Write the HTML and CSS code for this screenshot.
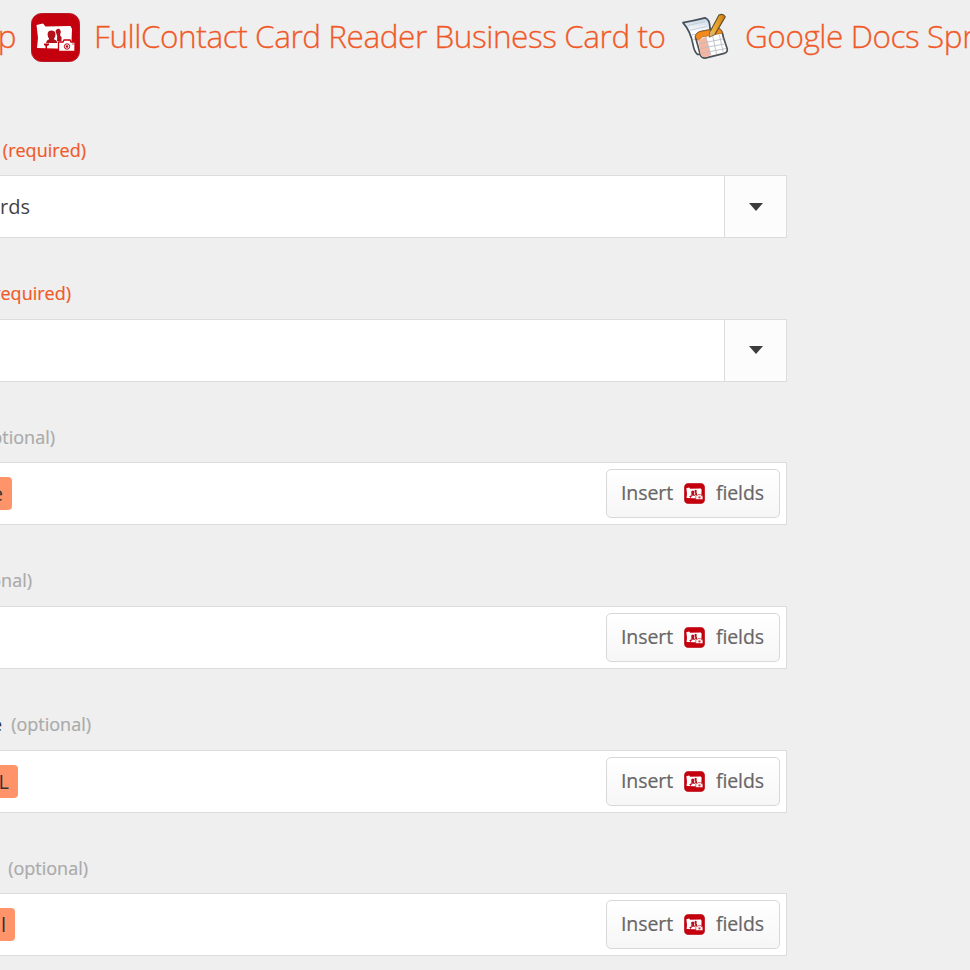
FILE: index.html
```
<!DOCTYPE html>
<html lang="en">
<head>
  <meta charset="UTF-8">
  <meta name="viewport" content="width=device-width, initial-scale=1.0">
  <link rel="stylesheet" href="styles.css">
</head>
<body>

  <!-- Shared card reader icon -->
  <svg class="sprite" width="0" height="0">
    <symbol id="card-reader" viewBox="0 0 49 49">
      <rect x="0.5" y="0.5" width="48" height="48" rx="10" fill="#c4000f" stroke="#b51a24"/>
      <path d="M5.500 12 L12 10.500 L14.500 13.500 L39.500 13 L41 16 L40.500 28 L42 36 L6 35 L7 25 Z" fill="#fff"/>
      <path d="M24.500 18 q2-3.500 4.500-1.500 q1.500 2 .2 4.500 q-.5 2 1.300 3 v4 h-4.500 q1-5-1.500-10 z" fill="#b3101c"/>
      <path d="M20.500 17.500 q4 0 4 4 q0 2.500-1.500 4 l.2 1 q3 .5 3 3.500 h-11 q0-3 2.700-3.500 l.2-1 q-1.500-1.500-1.500-4 q0-4 3.900-4 z" fill="#b3101c"/>
      <path d="M13 30.500 h5 v1.500 l-2 1 v3 h-1.500 v-3 l-1.500-1 z" fill="#c4000f"/>
      <path d="M27.500 29 h4.500 l1-2 h6 l1 2 h4 v9.500 h-16.500 z" fill="#fff" stroke="#c4000f" stroke-width="1.300"/>
      <circle cx="36" cy="33.500" r="2.700" fill="#fff" stroke="#c4000f" stroke-width="1"/>
      <circle cx="36" cy="33.500" r="1.300" fill="#c4000f"/>
      <circle cx="42" cy="31" r=".7" fill="#c4000f"/>
    </symbol>
  </svg>

  <h1 class="title">
    <span class="title-start">p</span>
    <svg class="title-icon"><use href="#card-reader"/></svg>
    <span class="title-trigger">FullContact Card Reader Business Card to</span>
    <svg class="docs-icon" viewBox="0 0 50 50">
      <defs>
        <linearGradient id="page" x1="0" y1="0" x2="0" y2="1">
          <stop offset="0" stop-color="#c3d4e5"/>
          <stop offset=".4" stop-color="#fff"/>
        </linearGradient>
        <linearGradient id="pencil" x1="0" y1="0" x2="1" y2="0">
          <stop offset="0" stop-color="#f9c14a"/>
          <stop offset="1" stop-color="#cf7d0c"/>
        </linearGradient>
      </defs>
      <path d="M1 10 Q12 8 24 5 Q29 7 29 15 L34 38 L20 43 L16 43 Q13 41 11.500 33 Q9 19 1 10 Z" fill="url(#page)" stroke="#46515c" stroke-width="1.800" stroke-linejoin="round"/>
      <path d="M6 13 L24 9 M8 18 L26 14 M10 23 L15 22 M11 28 L15 27" stroke="#c5ccd2" fill="none"/>
      <path d="M14 25 Q15 20 21 19 L38 16 Q42 18 43 25 L47 37 Q48 41 44 42 L24 47 Q20 47 19 43 Z" fill="#fff" stroke="#4e5257" stroke-width="1.800" stroke-linejoin="round"/>
      <path d="M14 25 Q14 20 21 19 L38 16 Q41 17 42 21 L21 25 L17 29 Z" fill="#f28b1c" stroke="#a95d16" stroke-width=".7"/>
      <path d="M17 28 L25 25 L30 44 L24 46 Q20 46 19 42 Z" fill="#f7b5a0"/>
      <path d="M18 32 L43 27 M19 37 L45 32 M20 42 L46 37 M25 25 L30 44 M32 24 L36 43 M39 23 L43 41" stroke="#b9bcc1" stroke-width=".9" fill="none"/>
      <path d="M38.500 2 Q43 0 45 4 L34.500 22 L28.500 25 L29.500 19 Z" fill="url(#pencil)" stroke="#65512f" stroke-width="1.200" stroke-linejoin="round"/>
      <path d="M29.500 19 L34.500 22 L28.500 25 Z" fill="#dfb06b"/>
    </svg>
    <span class="title-action">Google Docs Spr</span>
  </h1>

  <div class="form">
    <div class="field">
      <div class="label label-1"><span class="required">(required)</span></div>
      <div class="box">
        <span class="value">rds</span>
        <button class="toggle"><span class="caret"></span></button>
      </div>
    </div>
    <div class="field">
      <div class="label label-2"><span class="required">(required)</span></div>
      <div class="box">
        <span class="value"></span>
        <button class="toggle"><span class="caret"></span></button>
      </div>
    </div>
    <div class="field">
      <div class="label label-3"><span class="optional">(optional)</span></div>
      <div class="box">
        <div class="tag tag-e">e</div>
        <button class="insert"><span>Insert</span><svg class="insert-icon"><use href="#card-reader"/></svg><span>fields</span></button>
      </div>
    </div>
    <div class="field">
      <div class="label label-4"><span class="optional">(optional)</span></div>
      <div class="box">
        <button class="insert"><span>Insert</span><svg class="insert-icon"><use href="#card-reader"/></svg><span>fields</span></button>
      </div>
    </div>
    <div class="field">
      <div class="label label-5"><span class="name">e</span><span class="optional">(optional)</span></div>
      <div class="box">
        <div class="tag tag-url">L</div>
        <button class="insert"><span>Insert</span><svg class="insert-icon"><use href="#card-reader"/></svg><span>fields</span></button>
      </div>
    </div>
    <div class="field">
      <div class="label label-6"><span class="optional">(optional)</span></div>
      <div class="box">
        <div class="tag tag-email">l</div>
        <button class="insert"><span>Insert</span><svg class="insert-icon"><use href="#card-reader"/></svg><span>fields</span></button>
      </div>
    </div>
  </div>

</body>
</html>
```
FILE: styles.css
```
* {
  margin: 0;
  padding: 0;
  box-sizing: border-box;
}

body {
  width: 970px;
  height: 970px;
  overflow: hidden;
  font-family: "Open Sans", sans-serif;
  background-color: #efefef;
}

.sprite {
  display: block;
}

.title {
  display: flex;
  align-items: center;
  height: 74px;
  font-size: 31.5px;
  font-weight: 300;
  letter-spacing: -0.43px;
  color: #f05a28;
  white-space: nowrap;
  -webkit-text-stroke: 0.3px #f05a28;
}

.title span {
  flex: none;
  padding-bottom: 3px;
}

.title-start {
  display: flex;
  justify-content: flex-end;
  width: 16px;
}

.title-icon {
  flex: none;
  width: 49px;
  height: 49px;
  margin: 0 14px 0 15px;
}

.title-trigger {
  width: 572px;
}

.docs-icon {
  flex: none;
  width: 48px;
  height: 48px;
  margin: 0 15px 0 16px;
}

.form {
  width: 787px;
  padding-top: 51px;
}

.field {
  height: 143.67px;
}

.label {
  display: flex;
  justify-content: flex-end;
  align-items: center;
  gap: 9px;
  height: 50px;
  padding-bottom: 1px;
  font-size: 18px;
  white-space: nowrap;
}

.label-1 {
  width: 86px;
}

.label-2 {
  width: 71px;
}

.label-3 {
  width: 55px;
}

.label-4 {
  width: 32px;
}

.label-5 {
  width: 91px;
}

.label-6 {
  width: 88px;
}

.required {
  color: #f05a28;
  -webkit-text-stroke: 0.2px #f05a28;
}

.optional {
  color: #aaa;
  -webkit-text-stroke: 0.2px #aaa;
}

.name {
  color: #333;
}

.box {
  display: flex;
  align-items: center;
  height: 63px;
  border: 1px solid #dcdcdc;
  border-left: none;
  background-color: #fff;
}

.value {
  flex: 1;
  font-size: 20px;
  color: #444;
}

.toggle {
  display: flex;
  align-items: center;
  justify-content: center;
  width: 62px;
  height: 61px;
  border: none;
  border-left: 1px solid #dcdcdc;
  background-color: #fcfcfc;
}

.caret {
  border: 7.5px solid transparent;
  border-top: 8px solid #3c3c3c;
  border-bottom: none;
}

.tag {
  display: flex;
  align-items: center;
  justify-content: flex-end;
  height: 33px;
  padding-right: 9px;
  border-radius: 0 4px 4px 0;
  background-color: #ff946b;
  font-size: 20px;
  color: #333;
}

.tag-e {
  width: 12px;
}

.tag-url {
  width: 18px;
}

.tag-email {
  width: 15px;
}

.insert {
  display: flex;
  align-items: center;
  justify-content: center;
  gap: 11px;
  width: 174px;
  height: 49px;
  margin-left: auto;
  margin-right: 6.5px;
  padding-bottom: 2px;
  border: 1.5px solid #d8d8d8;
  border-radius: 5px;
  background: linear-gradient(#fff, #f6f6f6);
  font-family: inherit;
  font-size: 19.5px;
  letter-spacing: -0.1px;
  color: #666;
  -webkit-text-stroke: 0.2px #666;
}

.insert-icon {
  width: 21px;
  height: 21px;
  margin-top: 2px;
}
```
